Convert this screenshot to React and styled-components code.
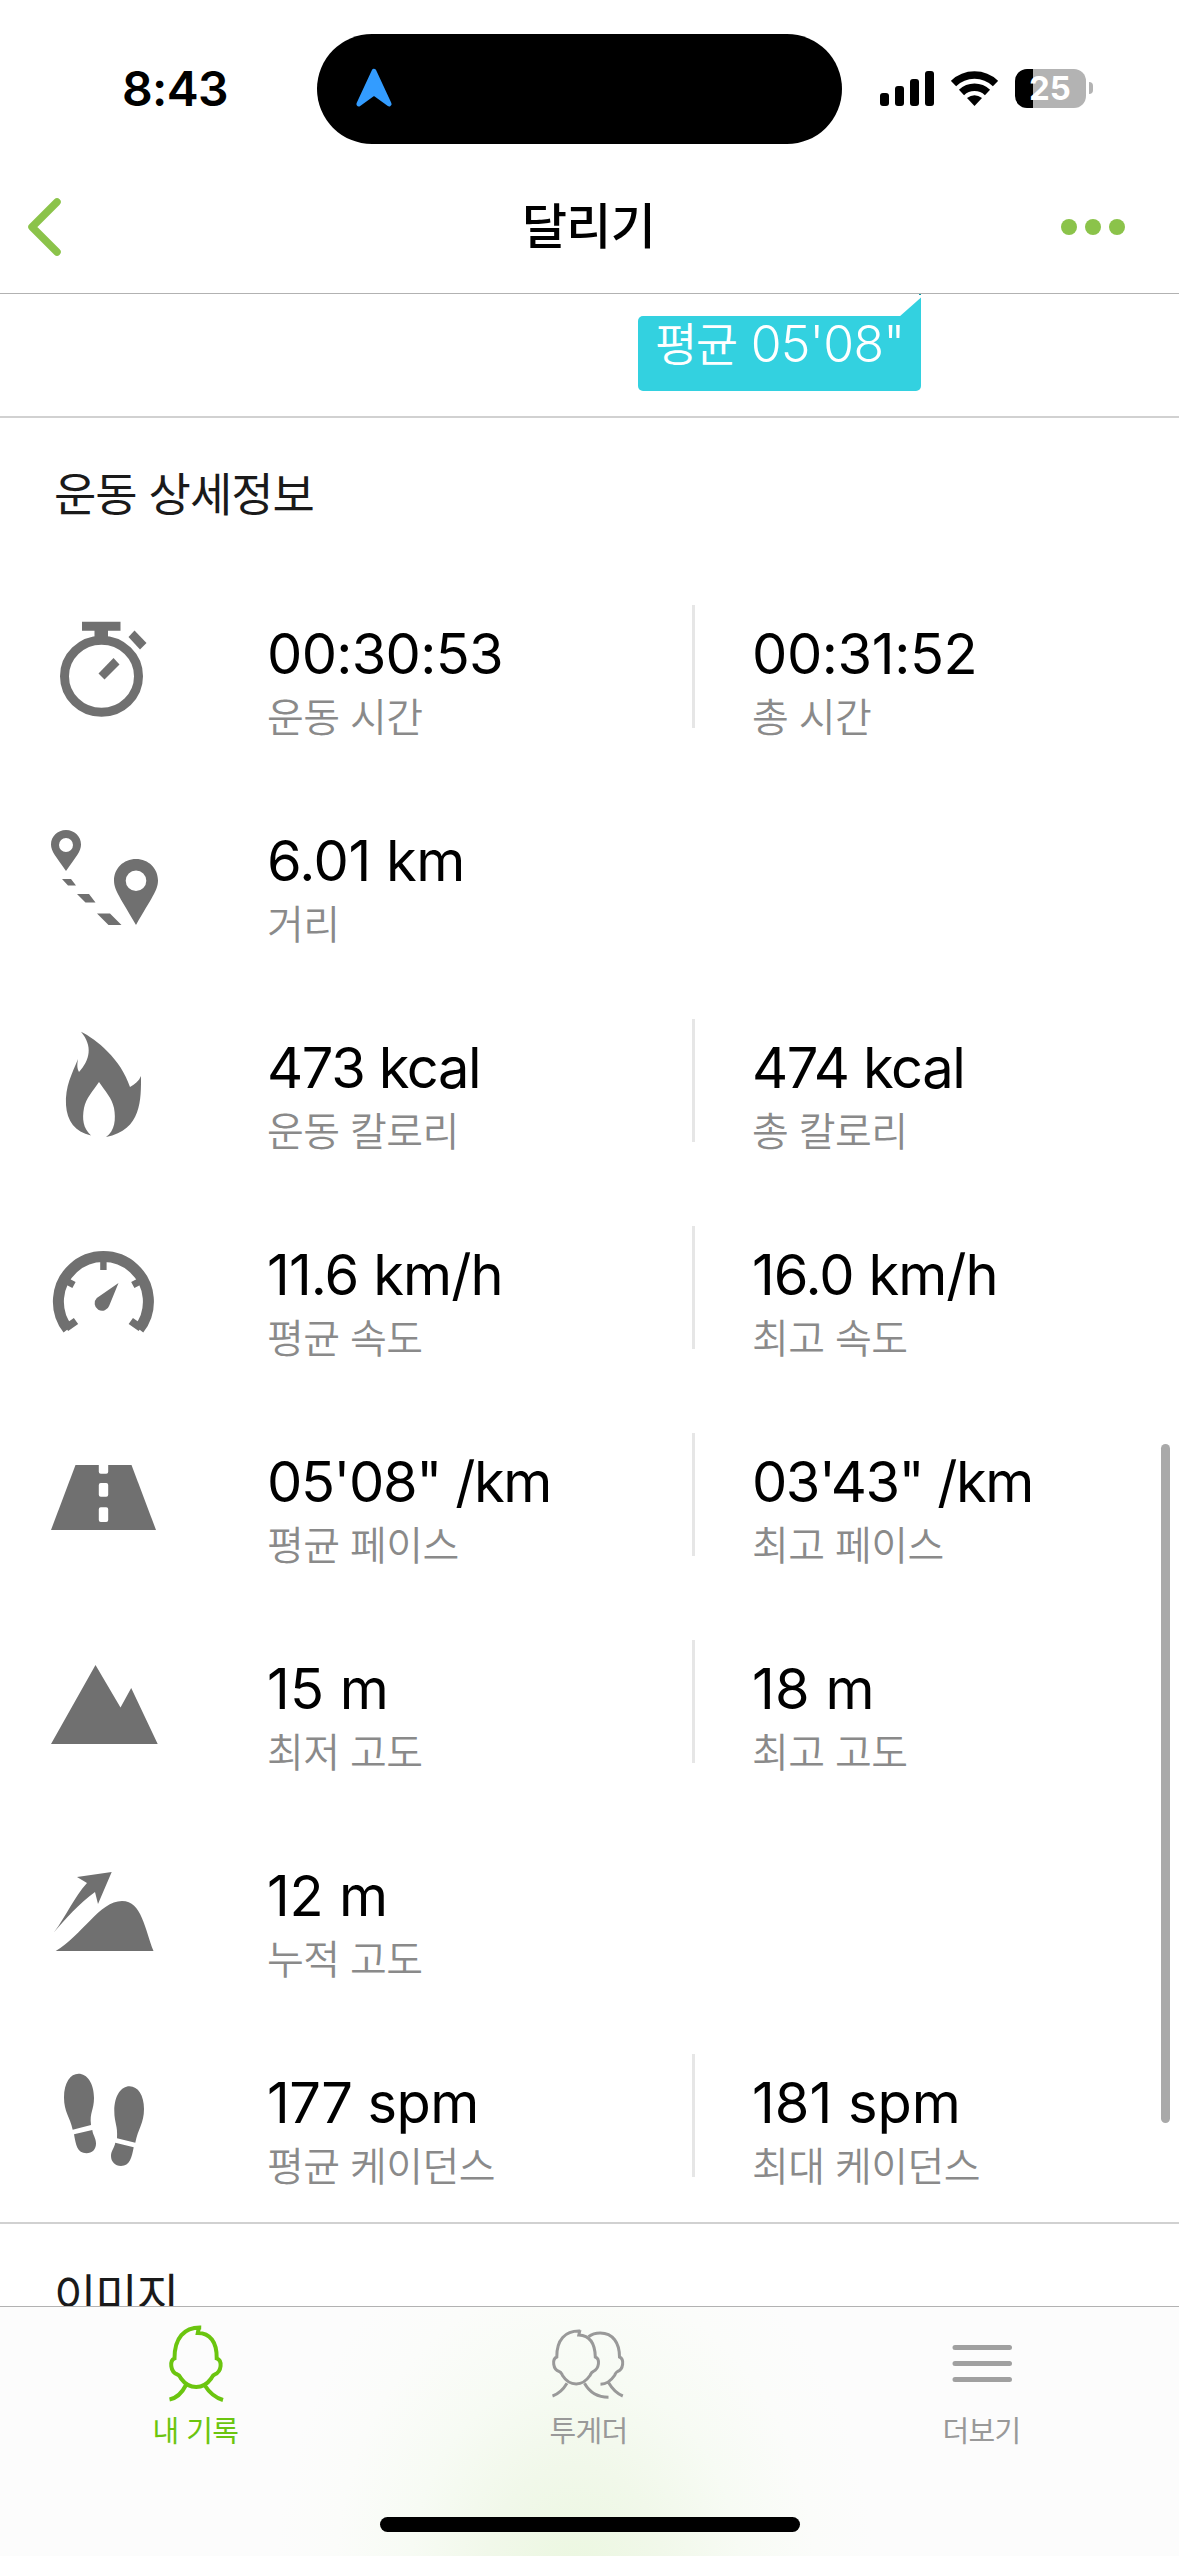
import React from "react";
import styled, { createGlobalStyle } from "styled-components";

const Global = createGlobalStyle`
  * { box-sizing: border-box; }
  html, body { margin: 0; padding: 0; background: #fff; overflow: hidden; }
  svg { display: block; }
`;

const Screen = styled.div`
  width: 1179px;
  height: 2556px;
  display: flex;
  flex-direction: column;
  position: relative;
  overflow: hidden;
  background: #fff;
  font-family: Inter, "Noto Sans CJK KR", sans-serif;
  color: #000;
`;

const StatusBar = styled.header`
  flex: none;
  display: grid;
  grid-template-columns: 317px 525px 1fr;
  height: 160px;
  padding-top: 33px;
  align-items: start;
`;

const Clock = styled.div`
  height: 111px;
  display: flex;
  align-items: center;
  padding-left: 122px;
  font-size: 48px;
  font-weight: 600;
  letter-spacing: -0.7px;
`;

const Island = styled.div`
  height: 110px;
  margin-top: 1px;
  border-radius: 55px;
  background: #000;
  display: flex;
  align-items: center;
  padding-left: 37px;
`;

const StatusIcons = styled.div`
  height: 110px;
  display: flex;
  align-items: center;
  padding-left: 38px;
`;

const Signal = styled.div`
  display: flex;
  align-items: flex-end;
  gap: 6px;
  height: 35px;
  margin-right: 17px;
`;

const SignalBar = styled.i`
  width: 9px;
  height: ${(p) => p.$h}px;
  border-radius: 3px;
  background: #000;
`;

const Battery = styled.div`
  width: 71px;
  height: 39px;
  margin-left: 17px;
  border-radius: 12px;
  background: linear-gradient(90deg, #000 18px, #b3b3b3 18px);
  color: #fff;
  font-size: 33px;
  font-weight: 700;
  line-height: 39px;
  padding-left: 14px;
`;

const BatteryNub = styled.i`
  width: 4px;
  height: 12px;
  margin-left: 3px;
  border-radius: 0 4px 4px 0;
  background: #b3b3b3;
`;

const NavBar = styled.nav`
  flex: none;
  height: 134px;
  display: grid;
  grid-template-columns: 200px 1fr 200px;
  align-items: center;
  border-bottom: 1px solid #b2b2b2;
`;

const NavTitle = styled.h1`
  margin: 0;
  padding-right: 2px;
  text-align: center;
  font-size: 49px;
  line-height: 62px;
  font-weight: 500;
  letter-spacing: -0.8px;
`;

const BackButton = styled.div`
  padding-left: 25px;
`;

const MoreButton = styled.div`
  display: flex;
  gap: 8px;
  padding-left: 82px;
`;

const Dot = styled.i`
  width: 16px;
  height: 16px;
  border-radius: 50%;
  background: #8bc34a;
`;

const Content = styled.main`
  flex: none;
  height: 2012px;
  overflow: hidden;
`;

const ChartTail = styled.section`
  height: 124px;
  border-bottom: 2px solid #d1d1d1;
  padding: 22px 0 0 638px;
`;

const Bubble = styled.div`
  position: relative;
  width: 283px;
  height: 75px;
  border-radius: 5px 0 5px 5px;
  background: #33d1e0;
  color: #fff;
  display: flex;
  gap: 14px;
  padding-left: 17px;
  font-weight: 350;
  line-height: 56px;
  white-space: nowrap;
`;

const BubbleLabel = styled.span`
  font-size: 46px;
  letter-spacing: -1.5px;
`;

const BubbleValue = styled.span`
  font-size: 50px;
  letter-spacing: -0.8px;
`;

const BubbleTip = styled.svg`
  position: absolute;
  right: 0;
  top: -23px;
`;

const SectionTitle = styled.h2`
  margin: 0;
  padding: ${(p) => (p.$tight ? 43 : 48)}px 0 0 54px;
  height: 144px;
  font-size: 46px;
  line-height: 56px;
  font-weight: 400;
  letter-spacing: -1px;
  color: #1a1a1a;
`;

const Stats = styled.section`
  height: 1662px;
  border-bottom: 2px solid #d1d1d1;
`;

const StatRow = styled.div`
  height: 207px;
  display: grid;
  grid-template-columns: 267px 425px 1fr;
`;

const IconSlot = styled.div`
  padding: 43px 0 0 45px;
`;

const PrimaryMetric = styled.div`
  padding-top: 44px;
`;

const SecondaryMetric = styled.div`
  display: flex;
  gap: 57px;
  padding-top: 44px;
`;

const Divider = styled.i`
  width: 3px;
  height: 123px;
  margin-top: -1px;
  background: #e6e6e6;
`;

const Value = styled.div`
  font-size: 56px;
  line-height: 96px;
  height: 84px;
  letter-spacing: ${(p) => p.$track}px;
  white-space: pre;
`;

const Label = styled.div`
  font-size: 40px;
  line-height: 56px;
  font-weight: 350;
  letter-spacing: -0.6px;
  color: #8a8a8a;
  white-space: nowrap;
`;

const ScrollThumb = styled.div`
  position: absolute;
  left: 1161px;
  top: 1444px;
  width: 9px;
  height: 679px;
  border-radius: 5px;
  background: #a9a9a9;
`;

const TabBar = styled.footer`
  flex: none;
  height: 250px;
  border-top: 1px solid #b2b2b2;
  background: radial-gradient(ellipse 300px 370px at 575px 270px, #ebf7e0 0%, #f1f8ea 30%, #f7fbf4 55%, #fbfcfa 80%, #fcfcfc 100%);
  display: flex;
  flex-direction: column;
  align-items: center;
`;

const Tabs = styled.div`
  width: 100%;
  height: 210px;
  display: grid;
  grid-template-columns: repeat(3, 1fr);
`;

const Tab = styled.div`
  display: flex;
  flex-direction: column;
  align-items: center;
  color: ${(p) => (p.$active ? "#6bc50f" : "#999")};
`;

const TabIcon = styled.div`
  height: 104px;
  padding: 15px 2px 0 0;
`;

const TabLabel = styled.span`
  padding-right: 2px;
  font-size: 29px;
  line-height: 42px;
  letter-spacing: -0.6px;
`;

const HomeIndicator = styled.div`
  width: 420px;
  height: 15px;
  border-radius: 8px;
  background: #000;
`;

/* Row icons share one 120x125 canvas whose origin sits 45px in and 43px below the row top. */
const icons = {
  stopwatch: (
    <>
      <ellipse cx="56.5" cy="71.300" rx="37" ry="36" fill="none" stroke="#707070" strokeWidth="9" />
      <path d="M37 16.700h38.500v9h-12.500v8h-13.500v-8h-12.500z" />
      <path d="M89.500 25.500l12 12.500-6.500 6.500-11.500-12.500z" />
      <path d="M68.500 53l6 6.500-15 15-6-6z" />
    </>
  ),
  route: (
    <>
      <path fillRule="evenodd" d="M21 18c-8.500 0-15 6.500-15 14.500 0 7 5 12 15 26.500 10-14.500 15-19.500 15-26.500C36 24.500 29.500 18 21 18zm0 8a7 7 0 1 1 0 14 7 7 0 0 1 0-14z" />
      <path fillRule="evenodd" d="M91 47c-12.500 0-22 9.500-22 21.500 0 10 7 18 22 44.500 15-26.500 22-34.500 22-44.500C113 56.500 103.500 47 91 47zm0 11.500a10.300 10.300 0 1 1 0 20.600 10.300 10.300 0 0 1 0-20.600z" />
      <path d="M17 67h9l5 6.500h-8zM32 82h12l6.500 8.500h-10zM52 101.500h13l11.500 11.500h-13z" />
    </>
  ),
  flame: (
    <path d="M36 12.700C51 20 76 40 85 68c5-3 9-6 11-11 0 23 1 54-35 61 9-6 10-18 8-29-2-10-9-17-15-26-6 9-13 16-15 26-2 11-1 20 7 27.500C30 113 22 102 21 86c-1-19 6-31 12-46-1 6-1 9 1 13 11-12 14-26 2-40.300z" />
  ),
  gauge: (
    <>
      <path d="M22.900 103.200A45 45 0 1 1 93.900 103.200" fill="none" stroke="#707070" strokeWidth="11" />
      <path d="M55.200 30h6.400v14h-6.400z" />
      <path d="M18.500 53.500l10.500 5.500M98.300 53.500l-10.500 5.500" fill="none" stroke="#707070" strokeWidth="7" />
      <path d="M21 102l10-7M95.800 102l-10-7" fill="none" stroke="#707070" strokeWidth="7.500" />
      <path d="M73.500 57L64.300 79.500a7.500 7.500 0 1 1-12.500-7.500z" />
    </>
  ),
  road: (
    <>
      <path d="M30.500 32h56l24.500 65H6z" />
      <path d="M53.800 31.500h9.400v7.200q0 2-2 2h-5.400q-2 0-2-2zM55.800 50h5.400q2 0 2 2v9.700q0 2-2 2h-5.400q-2 0-2-2v-9.700q0-2 2-2zM55.800 74.300h5.400q2 0 2 2v10.700q0 2-2 2h-5.400q-2 0-2-2v-10.700q0-2 2-2z" fill="#fff" />
    </>
  ),
  mountain: <path d="M50.500 25L75.500 67.500l10.700-19.500L112.700 104H6z" />,
  ascent: (
    <>
      <path d="M66.700 25L53 57l-3-12C34 57 21 71 9 85.300c12-16 20-35 33-49.300l-10-6z" />
      <path d="M10.700 104c26-15 44-50 66.300-50C97 54 100 83 108.500 104z" />
    </>
  ),
  steps: (
    <>
      <path d="M33.500 19.700C42 19.700 49 29 49 44c0 12-4.500 14-3 27l-18.300 4.700C25 63 19 58 19 43.500c0-15 6.500-23.800 14.500-23.800zM29 80.300L47.300 76c.5 5 3.700 8 3.700 13.500 0 6-4 9.800-9.500 9.800C32 99.300 31 91 29 80.300z" />
      <path d="M84.500 32.300C93 32.300 99 41.500 99 55c0 14-6 20-8.700 33.700L72 84.300c1-13-2.700-15-2.700-27.300 0-15.500 7-24.700 15.200-24.700zM70.300 88.700l18.400 4.600C86.500 104 85 112 76 112c-6 0-10-4.500-10-10 0-5 3.300-8 4.300-13.300z" />
    </>
  ),
};

const rows = [
  {
    icon: "stopwatch",
    first: { value: "00:30:53", label: "운동 시간", track: -0.7 },
    second: { value: "00:31:52", label: "총 시간", track: -0.4 },
  },
  { icon: "route", first: { value: "6.01 km", label: "거리", track: -0.5 } },
  {
    icon: "flame",
    first: { value: "473 kcal", label: "운동 칼로리", track: -1.4 },
    second: { value: "474 kcal", label: "총 칼로리", track: -1.4 },
  },
  {
    icon: "gauge",
    first: { value: "11.6 km/h", label: "평균 속도", track: -0.9 },
    second: { value: "16.0 km/h", label: "최고 속도", track: -1 },
  },
  {
    icon: "road",
    first: { value: "05'08\" /km", label: "평균 페이스", track: -1.4 },
    second: { value: "03'43\" /km", label: "최고 페이스", track: -1.5 },
  },
  {
    icon: "mountain",
    first: { value: "15 m", label: "최저 고도", track: 0.1 },
    second: { value: "18 m", label: "최고 고도", track: 0.1 },
  },
  { icon: "ascent", first: { value: "12 m", label: "누적 고도", track: -0.2 } },
  {
    icon: "steps",
    first: { value: "177 spm", label: "평균 케이던스", track: -0.6 },
    second: { value: "181 spm", label: "최대 케이던스", track: 0 },
  },
];

function Reading({ value, label, track }) {
  return (
    <div>
      <Value $track={track}>{value}</Value>
      <Label>{label}</Label>
    </div>
  );
}

function PersonIcon() {
  return (
    <svg width="60" height="84" viewBox="0 0 60 84" fill="none" stroke="currentColor" strokeWidth="4">
      <path d="M35.200 5.500C18 5 8.500 16 8.500 36.300c-5 2-4.500 14 3 16.200 2 .5 2.500 2 3.500 4C19 62 24 65 30.200 65s11-3 15-8.500c1-2 1.500-3.500 3.500-4 7-3 8-14 2-16.200C51 20 44 11 31.800 11L33 5" />
      <path d="M20 63C16 71 11 76 3.500 77.500M38.500 63c5 8 10 12.500 18.500 15" />
    </svg>
  );
}

function PeopleIcon() {
  return (
    <svg width="80" height="84" viewBox="0 0 80 84" fill="none" stroke="currentColor" strokeWidth="3">
      <path d="M31.200 9C16 8.500 7.500 18 7.800 35c-5 2-4 12.500 2.400 14.500 2 .5 2.300 2 3.300 4C17 59 21 62 27.200 62s10-3 13.800-8.500c1-2 1.500-3.500 3.300-4 6-3 7-12.500 2-14.500C46 21 41 13.500 29.800 13L31 8" />
      <path d="M18 61.300C14 68 9.500 72 3.500 74M35.500 61.300c5 9 12 14 24 14" />
      <path d="M39.500 14.700C43 12 46 11 51.200 11 64 11 70.500 21 70.500 35c5 2 4 12.500-2 14.500-2 1-2 2-3 4C61.500 59.500 58 62 51.500 62.300M59.800 61c3.500 6 7 10 14 13" />
    </svg>
  );
}

function MenuIcon() {
  return (
    <svg width="60" height="84" viewBox="0 0 60 84" stroke="#a0a0a0" strokeWidth="5" strokeLinecap="round">
      <path d="M3 25.500h54.500M3 41.500h54.500M3 57.500h54.500" />
    </svg>
  );
}

export default function App() {
  return (
    <Screen>
      <Global />
      <StatusBar>
        <Clock>8:43</Clock>
        <Island>
          <svg width="40" height="44" viewBox="0 0 40 44">
            <path d="M20 4.500L36 39 20 27.500 4 39z" fill="#339cff" stroke="#339cff" strokeWidth="5" strokeLinejoin="round" transform="translate(1 0)scale(.95)" />
          </svg>
        </Island>
        <StatusIcons>
          <Signal>
            {[13, 20, 27, 35].map((h) => <SignalBar key={h} $h={h} />)}
          </Signal>
          <svg width="47" height="35" viewBox="0 0 47 35" fill="none" stroke="#000" strokeWidth="7.500">
            <path d="M2.500 12.500a30 30 0 0 1 42 0M10.500 21.500a19 19 0 0 1 26 0" />
            <path d="M23.500 35l-7.500-8q7.500-5.500 15 0z" fill="#000" stroke="none" />
          </svg>
          <Battery>25</Battery>
          <BatteryNub />
        </StatusIcons>
      </StatusBar>
      <NavBar>
        <BackButton>
          <svg width="40" height="62" viewBox="0 0 40 62" fill="none" stroke="#8bc34a" strokeWidth="7.500" strokeLinecap="round" strokeLinejoin="round">
            <path d="M32 6L7 31l25 25" />
          </svg>
        </BackButton>
        <NavTitle>달리기</NavTitle>
        <MoreButton><Dot /><Dot /><Dot /></MoreButton>
      </NavBar>
      <Content>
        <ChartTail>
          <Bubble>
            <BubbleLabel>평균</BubbleLabel>
            <BubbleValue>05'08"</BubbleValue>
            <BubbleTip width="22" height="24" viewBox="0 0 22 24">
              <path d="M22 4.500V24H0z" fill="#33d1e0" />
              <path d="M20 0h2v2h-2z" fill="#0c9aa8" />
            </BubbleTip>
          </Bubble>
        </ChartTail>
        <SectionTitle>운동 상세정보</SectionTitle>
        <Stats>
          {rows.map((row) => (
            <StatRow key={row.icon}>
              <IconSlot>
                <svg width="120" height="125" viewBox="0 0 120 125" fill="#707070">{icons[row.icon]}</svg>
              </IconSlot>
              <PrimaryMetric><Reading {...row.first} /></PrimaryMetric>
              {row.second && (
                <SecondaryMetric>
                  <Divider />
                  <Reading {...row.second} />
                </SecondaryMetric>
              )}
            </StatRow>
          ))}
        </Stats>
        <SectionTitle $tight>이미지</SectionTitle>
      </Content>
      <TabBar>
        <Tabs>
          <Tab $active><TabIcon><PersonIcon /></TabIcon><TabLabel>내 기록</TabLabel></Tab>
          <Tab><TabIcon><PeopleIcon /></TabIcon><TabLabel>투게더</TabLabel></Tab>
          <Tab><TabIcon><MenuIcon /></TabIcon><TabLabel>더보기</TabLabel></Tab>
        </Tabs>
        <HomeIndicator />
      </TabBar>
      <ScrollThumb />
    </Screen>
  );
}
